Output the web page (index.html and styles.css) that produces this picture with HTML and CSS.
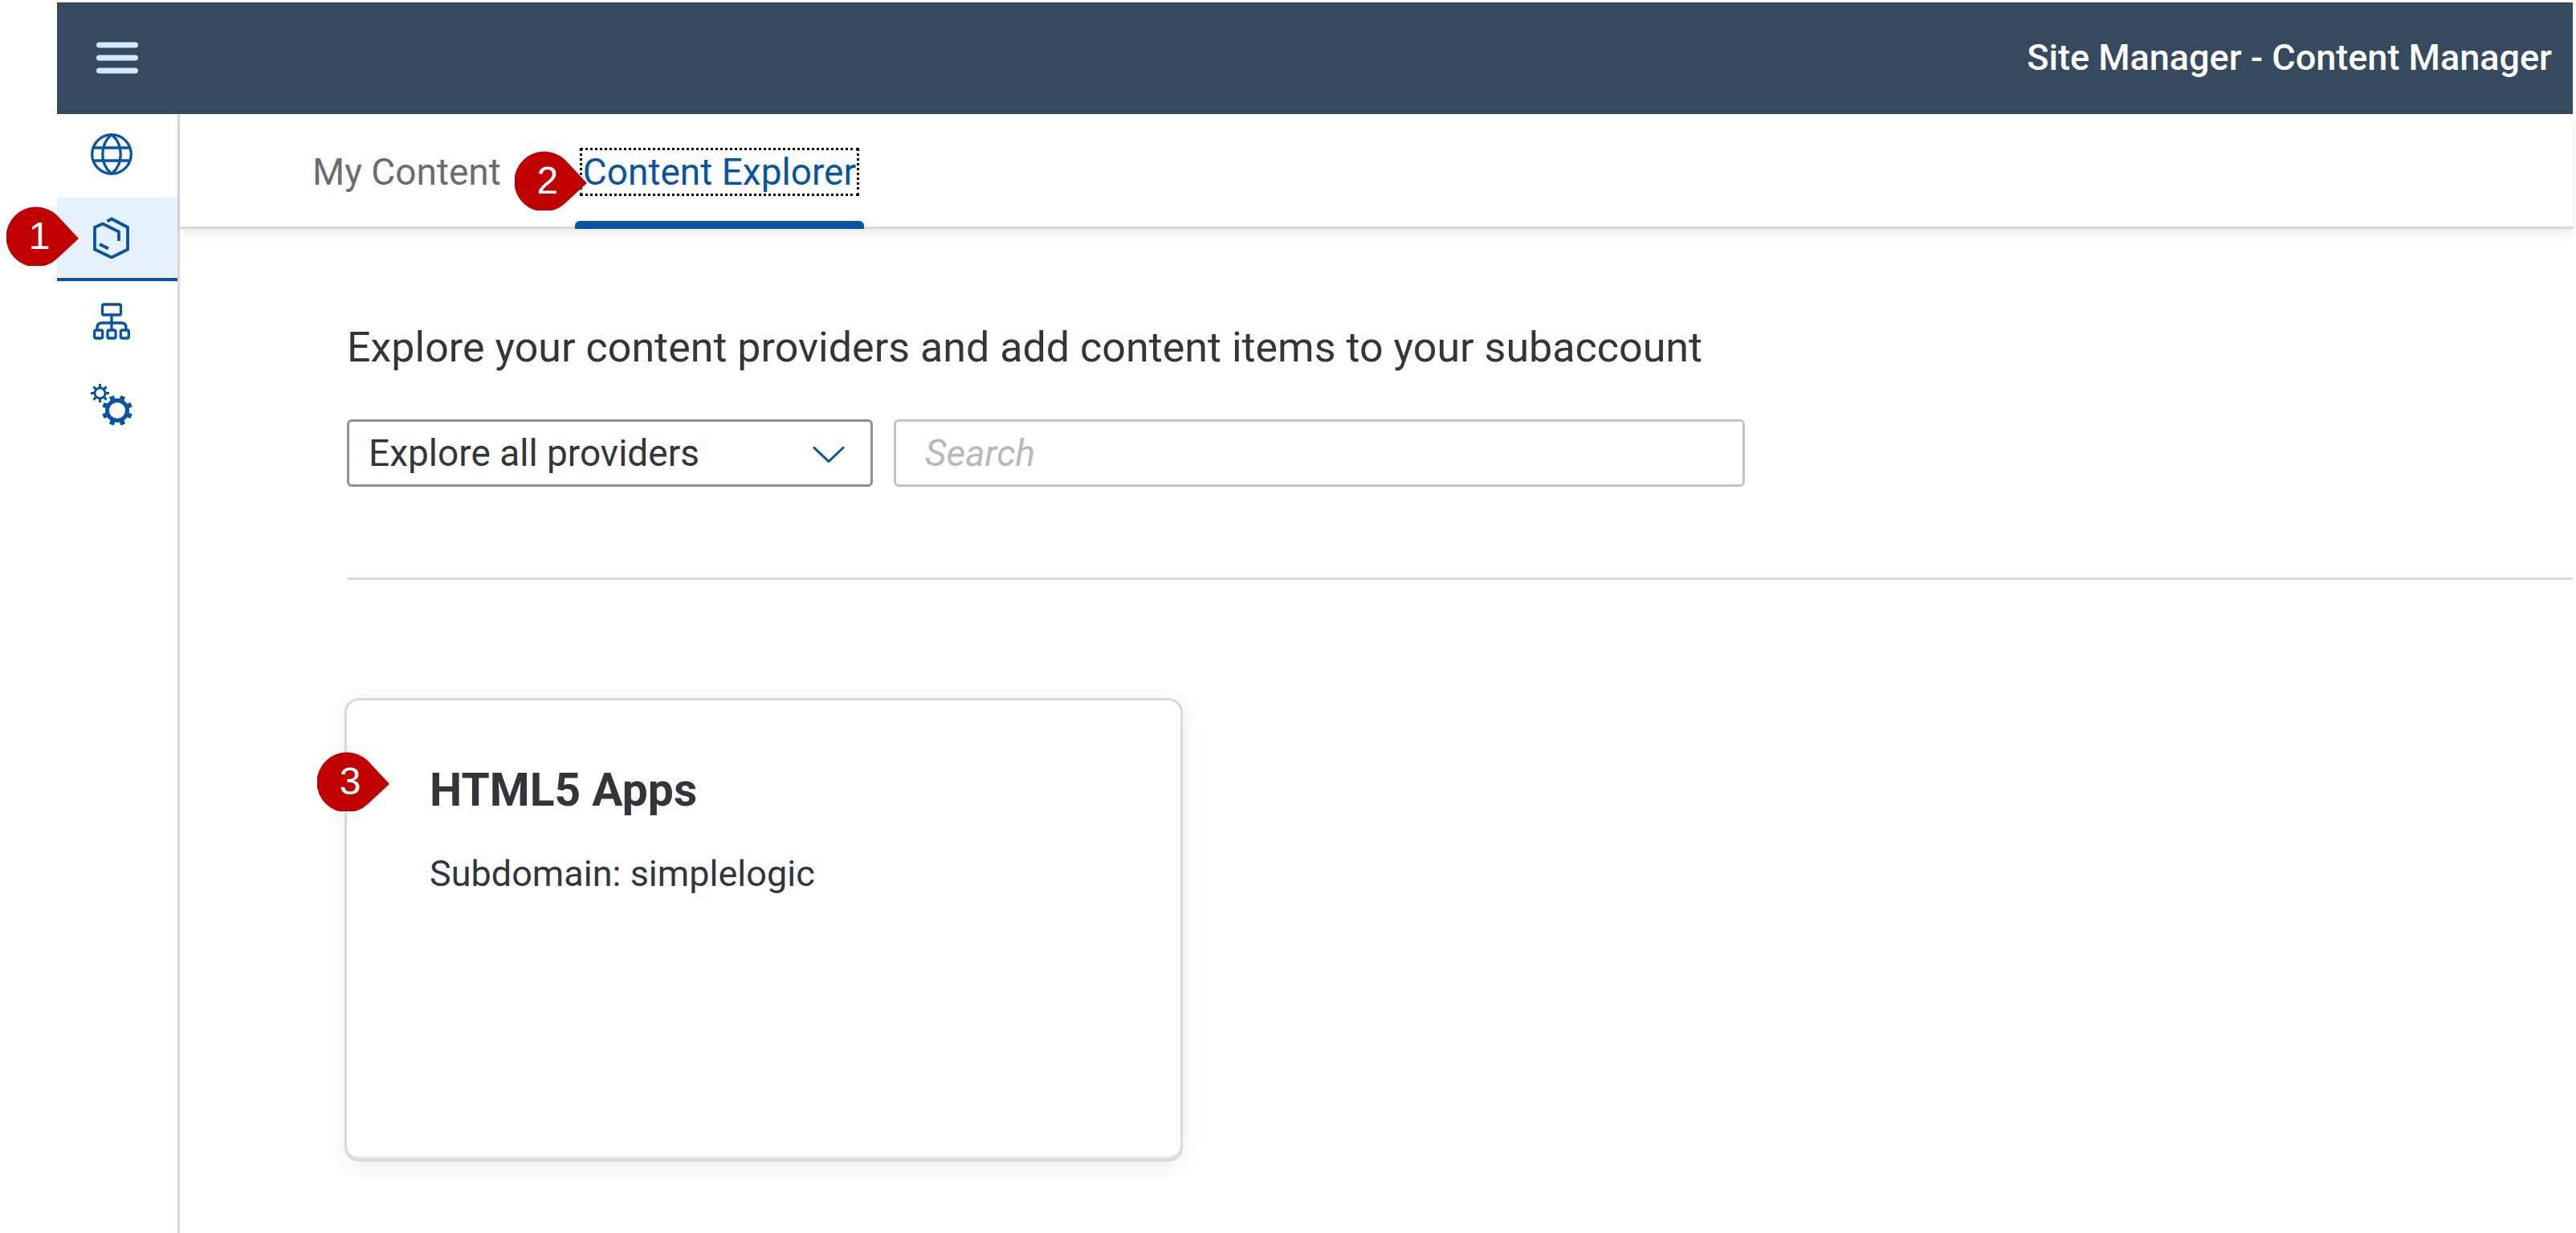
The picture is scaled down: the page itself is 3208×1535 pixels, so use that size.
FILE: index.html
```html
<!DOCTYPE html>
<html lang="en">
<head>
<meta charset="utf-8">
<title>Site Manager - Content Manager</title>
<meta name="viewport" content="width=device-width, initial-scale=1">
<link rel="stylesheet" href="styles.css">
</head>
<body>
<div class="app">
  <header class="shell">
    <button class="menu" type="button" aria-label="Toggle navigation">
      <svg viewBox="0 0 52 40" width="52" height="40"><path d="M3.500 4h45M3.500 20h45M3.500 36h45" stroke="#d1e8ff" stroke-width="7" stroke-linecap="round"/></svg>
    </button>
    <h1 class="shell-title">Site Manager - Content Manager</h1>
  </header>
  <div class="body">
    <nav class="side" aria-label="Main">
      <a class="side-item" href="#sites" aria-label="Site Directory">
        <svg viewBox="0 0 52 52" width="52" height="52" fill="none" stroke="#0854a0" stroke-width="3.300"><circle cx="26" cy="26" r="24.300"/><path d="M26 1.500C11 14 11 38 26 50.500C41 38 41 14 26 1.500zM3 18h46M3 34h46"/></svg>
      </a>
      <a class="side-item side-item-active" href="#content" aria-label="Content Manager" aria-current="page">
        <svg viewBox="0 0 52 52" width="52" height="52" fill="none" stroke="#0854a0" stroke-width="3.800"><path d="M20.500 5.500L26 2.500L46 13V40.500L26 50.500L5 40.500V13L15 8.500L35 18.500V30M11 34L22 39.500"/></svg>
        <span class="marker marker-nav">1</span>
      </a>
      <a class="side-item" href="#providers" aria-label="Provider Manager">
        <svg viewBox="0 0 52 52" width="52" height="52" fill="none" stroke="#0854a0" stroke-width="3.300"><rect x="14.500" y="5" width="23" height="13" rx="2"/><rect x="4.700" y="37" width="10" height="10" rx="2"/><rect x="21" y="37" width="10" height="10" rx="2"/><rect x="37.300" y="37" width="10" height="10" rx="2"/><path d="M26 18v19M8 37v-3q0-6 6-6h24q6 0 6 6v3"/></svg>
      </a>
      <a class="side-item" href="#settings" aria-label="Settings">
        <svg viewBox="0 0 52 52" width="52" height="52" fill="none" stroke="#0854a0"><circle cx="11.500" cy="11.500" r="6.500" stroke-width="2.800"/><path stroke-width="3" d="M11.500 0v5M11.500 18v5M0 11.500h5M18 11.500h5M3.400 3.400l3.500 3.500M16.100 16.100l3.500 3.500M19.600 3.400l-3.500 3.500M6.900 16.100l-3.500 3.500"/><circle cx="33" cy="33" r="12.500" stroke-width="5"/><path stroke-width="6" d="M38.400 20l1.900-4.600M46 27.600l4.600-1.900M46 38.400l4.600 1.900M38.400 46l1.900 4.600M27.600 46l-1.900 4.600M20 38.400l-4.600 1.900M20 27.600l-4.600-1.900M27.600 20l-1.900-4.600"/></svg>
      </a>
    </nav>
    <main class="main">
      <nav class="tabs" aria-label="Content">
        <a class="tab" href="#my-content"><span class="tab-text">My Content</span></a>
        <a class="tab tab-active" href="#explorer" aria-current="true"><span class="tab-text">Content Explorer</span><span class="marker marker-tab">2</span></a>
      </nav>
      <section class="explorer">
        <h2 class="lead">Explore your content providers and add content items to your subaccount</h2>
        <form class="filters">
          <div class="picker">
            <select class="field" aria-label="Provider"><option>Explore all providers</option></select>
            <svg class="picker-arrow" viewBox="0 0 40 22" width="40" height="22" fill="none" stroke="#0854a0" stroke-width="3"><path d="M1 1.500L20 19.500L39 1.500"/></svg>
          </div>
          <input class="field search" type="search" placeholder="Search" aria-label="Search">
        </form>
        <hr class="rule">
        <article class="card">
          <h3 class="card-title">HTML5 Apps</h3>
          <p class="card-text">Subdomain: simplelogic</p>
          <span class="marker marker-card">3</span>
        </article>
      </section>
    </main>
  </div>
</div>
</body>
</html>
```
FILE: styles.css
```css
* { box-sizing: border-box; }
body {
  margin: 0;
  background: #fff;
  color: #32363a;
  font-family: Roboto, "Liberation Sans", sans-serif;
  font-size: 46px;
  line-height: 52px;
}
h1, h2, h3, p { margin: 0; font-weight: 400; }
a { color: inherit; text-decoration: none; }
svg { display: block; }
.app {
  display: flex;
  flex-direction: column;
  min-height: 100vh;
  padding: 3px 4px 0 71px;
}
.shell {
  display: flex;
  align-items: center;
  justify-content: space-between;
  height: 139px;
  padding: 0 26px 2px 49px;
  background: #354a5f;
}
.menu { padding: 0; border: 0; background: none; }
.shell-title { color: #fff; font-size: 45px; line-height: 52px; font-weight: 500; }
.body { display: flex; flex: 1; }
.side {
  flex: none;
  width: 153px;
  border-right: 3px solid #d9d9d9;
}
.side-item {
  position: relative;
  display: flex;
  align-items: center;
  height: 104px;
  padding: 0 0 4px 42px;
}
.side-item-active { background: #e5f0fa; box-shadow: inset 0 -4px #0854a0; }
.main { flex: 1; min-width: 0; }
.tabs {
  display: flex;
  gap: 82px;
  height: 143px;
  padding-left: 155px;
  border-bottom: 3px solid #d9d9d9;
  box-shadow: 0 6px 12px -2px rgba(0, 0, 0, .1);
}
.tab {
  position: relative;
  height: 143px;
  padding: 42px 6px 0;
  color: #6a6d70;
}
.tab-text { display: block; padding: 4px; }
.tab-active { color: #0854a0; }
.tab-active .tab-text { outline: 3px dotted #000; outline-offset: -3px; }
.tab-active::after {
  content: "";
  position: absolute;
  inset: auto 0 0 0;
  height: 10px;
  border-radius: 6px 6px 0 0;
  background: #0854a0;
}
.explorer { padding: 118px 0 84px 208px; }
.lead { font-size: 52px; line-height: 60px; }
.filters { display: flex; gap: 26px; margin-top: 59px; }
.picker { position: relative; width: 655px; }
.field {
  display: block;
  width: 100%;
  height: 84px;
  padding: 0 24px;
  border: 3px solid #89919a;
  border-radius: 6px;
  background: #fff;
  color: #32363a;
  font: inherit;
  appearance: none;
}
.picker-arrow { position: absolute; right: 35px; top: 33px; pointer-events: none; }
.search { width: 1060px; padding: 0 36px; border-color: #bfc5ca; }
.search::placeholder { color: #b6b8ba; font-style: italic; opacity: 1; }
.rule { height: 3px; margin: 113px 0 147px; border: 0; background: #d9d9d9; }
.card {
  position: relative;
  width: 1044px;
  min-height: 577px;
  margin-left: -3px;
  padding: 80px 103px;
  border: 3px solid #d9d9d9;
  border-radius: 18px;
  box-shadow: 0 4px 24px rgba(0, 0, 0, .08), inset 0 -3px #e5e5e5;
}
.card-title { font-size: 57px; line-height: 64px; font-weight: 700; }
.card-text { margin-top: 46px; font-size: 45px; }
.marker {
  position: absolute;
  width: 90px;
  height: 75px;
  padding-right: 8px;
  background: #c00000;
  clip-path: path("M63 12L90 41L63 66A37.500 37.500 0 1 1 63 12Z");
  color: #fff;
  font: 48px/75px "Liberation Sans", Arial, sans-serif;
  text-align: center;
}
.marker-nav { left: -63px; top: 10px; }
.marker-tab { left: -75px; top: 45px; }
.marker-card { left: -37px; top: 63px; }
```
